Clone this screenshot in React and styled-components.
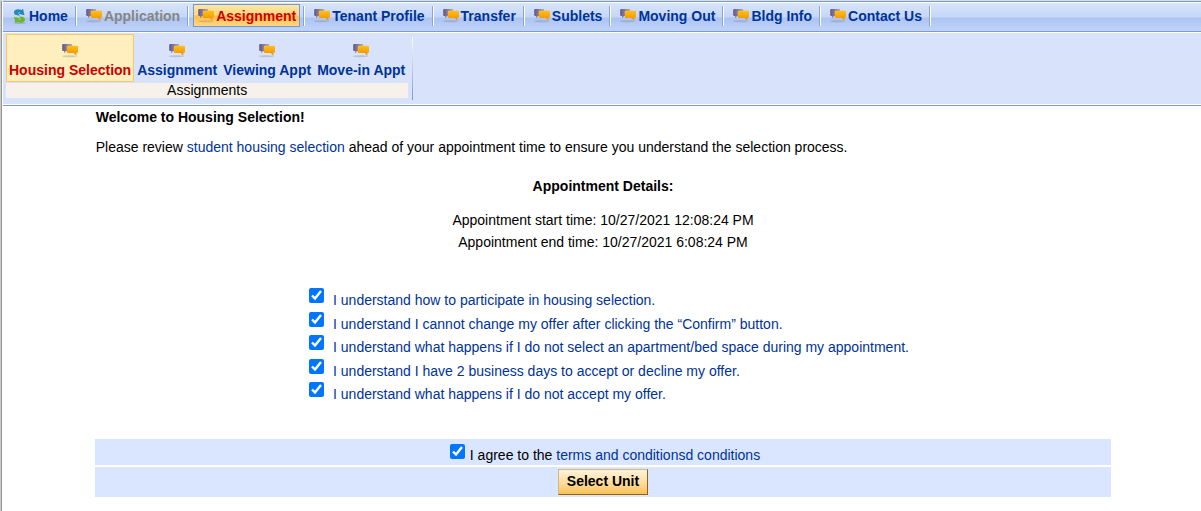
import React from "react";
import styled, { createGlobalStyle, css } from "styled-components";

const GlobalStyle = createGlobalStyle`
  * {
    box-sizing: border-box;
  }

  body {
    margin: 0;
    background: #ffffff;
    color: #000000;
    font-family: "Liberation Sans", Arial, sans-serif;
    font-size: 14px;
    line-height: 16px;
  }
`;

const Page = styled.div`
  min-height: 100vh;
  padding-left: 1px;
  border-left: 1px solid #c9c9c9;
  box-shadow: inset 1px 0 0 #959595;
  border-top: 1px solid #deddd3;
`;

const Bar = styled.header`
  margin-left: 1px;
  border-bottom: 1px solid #7b99d3;
`;

const TabBar = styled.nav`
  display: flex;
  height: 31px;
  padding-bottom: 2px;
  border-top: 1px solid #7b99d3;
  border-bottom: 1px solid #7b99d3;
  box-shadow: inset 0 1px 0 #ffffff;
  background: linear-gradient(#d9e5fb 0, #c5d6f7 15px, #adc4f3 16px, #c0d3f8 100%);
`;

const TabItem = styled.div`
  display: flex;
  align-items: center;
  padding-left: 4px;

  &::after {
    content: "";
    width: 2px;
    height: 20px;
    margin-left: 3px;
    background: linear-gradient(90deg, #86a3dc 50%, #ffffff 50%);
  }
`;

const Tab = styled.a`
  display: flex;
  align-items: center;
  gap: 2px;
  height: 23px;
  padding: 0 3px 0 4px;
  border: 1px solid transparent;
  color: ${(props) => (props.$muted ? "#868686" : "#003399")};
  font-weight: bold;
  text-decoration: none;
  white-space: nowrap;

  ${(props) =>
    props.$active &&
    css`
      border-color: #6f9ad3;
      background: linear-gradient(#ffe5a0 0, #ffd883 10px, #ffc04c 11px, #ffd683 100%);
      color: #cc0000;
    `}
`;

const Ribbon = styled.div`
  display: flex;
  height: 73px;
  padding: 1px 3px 4px;
  border-top: 1px solid #ffffff;
  border-bottom: 1px solid #ffffff;
  background: #d8e2fa;
`;

const RibbonGroup = styled.section`
  display: flex;
  flex-direction: column;
`;

const RibbonItems = styled.div`
  display: flex;
`;

const RibbonLink = styled.a`
  display: flex;
  flex-direction: column;
  align-items: center;
  gap: 4px;
  height: 48px;
  padding: 8px 2px 0;
  border: 1px solid ${(props) => (props.$active ? "#fdc667" : "transparent")};
  background: ${(props) => (props.$active ? "#ffefbf" : "transparent")};
  color: ${(props) => (props.$active ? "#cc0000" : "#003399")};
  font-weight: bold;
  text-decoration: none;
  white-space: nowrap;
`;

const RibbonTitle = styled.div`
  height: 15px;
  margin-top: 1px;
  background: #f6f1ea;
  line-height: 15px;
  text-align: center;
`;

const RibbonDivider = styled.div`
  width: 1px;
  height: 63px;
  margin: 3px 0 0 4px;
  background: linear-gradient(#ffffff, #7b99d3);
`;

const Content = styled.main`
  margin-left: 3px;
`;

const Inner = styled.div`
  width: 85%;
  margin: 0 auto;
`;

const Intro = styled.div`
  padding: 3px 1px 0;
`;

const Welcome = styled.h1`
  margin: 0 0 14px;
  font-size: 14px;
  line-height: 16px;
`;

const Text = styled.p`
  margin: 0;
`;

const Link = styled.a`
  color: #003399;
  text-decoration: none;
`;

const Details = styled.section`
  margin-top: 23px;
  text-align: center;
  line-height: 22px;
`;

const DetailsTitle = styled.h2`
  margin: 0 0 15px;
  font-size: 14px;
  line-height: 16px;
`;

const CheckList = styled.div`
  display: grid;
  grid-template-rows: repeat(5, 1fr);
  width: fit-content;
  height: 118px;
  margin: 34px auto 0;
  padding-left: 8px;
`;

const CheckRow = styled.div`
  display: flex;
  align-items: flex-start;
  gap: 6px;
  color: #003399;

  label {
    padding-top: 5px;
  }
`;

const CheckBox = styled.input`
  flex: none;
  width: 15px;
  height: 15px;
  margin: 1px 3px 0 4px;
`;

const Band = styled.div`
  display: flex;
  justify-content: center;
  align-items: flex-start;
  height: ${(props) => props.$height}px;
  padding-top: ${(props) => props.$top}px;
  background: #dae6ff;
`;

const Bands = styled.div`
  display: grid;
  gap: 2px;
  margin-top: 34px;

  label {
    padding: 4px 0 0 2px;
  }
`;

const SubmitButton = styled.button`
  height: 26px;
  padding: 0 8px 2px;
  border: 1px solid;
  border-color: #d5b77c #98610f #98610f #d5b77c;
  background: linear-gradient(#fff3dc, #ffdfa1 50%, #fbc158);
  color: #000000;
  font: bold 14px "Liberation Sans", Arial, sans-serif;
`;

const ChatIcon = () => (
  <svg width="16" height="15" viewBox="0 0 16 15" aria-hidden="true">
    <defs>
      <linearGradient id="orange" x1="0" y1="0" x2="0" y2="1">
        <stop offset="0" stopColor="#ffc116" />
        <stop offset="1" stopColor="#f28b00" />
      </linearGradient>
      <linearGradient id="purple" x1="0" y1="0" x2="1" y2="0">
        <stop offset="0" stopColor="#625785" />
        <stop offset="1" stopColor="#b3a9c4" />
      </linearGradient>
    </defs>
    <ellipse cx="7.5" cy="13.2" rx="7.5" ry="1" fill="#777777" opacity="0.3" />
    <path d="M1.2 1h8q1 0 1 1v6H4l-1.700 2.300V8H1.200q-1 0-1-1V2q0-1 1-1z" fill="url(#purple)" />
    <path
      d="M6 2.800h9q1 0 1 1v5q0 1-1 1h-.6v3L11.600 10H6q-1.200 0-1.200-1.200V4Q4.800 2.800 6 2.800z"
      fill="url(#orange)"
    />
  </svg>
);

const RefreshIcon = () => (
  <svg width="15" height="16" viewBox="0 0 15 16" aria-hidden="true">
    <ellipse cx="8" cy="15" rx="6" ry="1" fill="#777777" opacity="0.3" />
    <path
      d="M2 4.500C2 1.500 6 .5 9.500 2L11 .8l1.500 6.400-6-1.500 1.600-1.400C6 3.700 5.500 5 8 7.500 5 7.700 2 7 2 4.500z"
      fill="#2587bd"
    />
    <path
      d="M13 11.500c0 3-4 4-7.500 2.500L3.500 15.200 2 8.800l6 1.500-1.500 1.400c2 .6 3-.7.500-3.200 3-.2 6 .5 6 3z"
      fill="#6cb82b"
    />
  </svg>
);

const tabs = [
  { label: "Home", icon: RefreshIcon },
  { label: "Application", muted: true },
  { label: "Assignment", active: true },
  { label: "Tenant Profile" },
  { label: "Transfer" },
  { label: "Sublets" },
  { label: "Moving Out" },
  { label: "Bldg Info" },
  { label: "Contact Us" },
];

const ribbonLinks = ["Housing Selection", "Assignment", "Viewing Appt", "Move-in Appt"];

const statements = [
  "I understand how to participate in housing selection.",
  "I understand I cannot change my offer after clicking the “Confirm” button.",
  "I understand what happens if I do not select an apartment/bed space during my appointment.",
  "I understand I have 2 business days to accept or decline my offer.",
  "I understand what happens if I do not accept my offer.",
];

const Header = () => {
  return (
    <Bar>
      <TabBar>
        {tabs.map(({ label, icon: Icon = ChatIcon, muted, active }) => (
          <TabItem key={label}>
            <Tab href="#" $muted={muted} $active={active}>
              <Icon />
              {label}
            </Tab>
          </TabItem>
        ))}
      </TabBar>
      <Ribbon>
        <RibbonGroup>
          <RibbonItems>
            {ribbonLinks.map((label, i) => (
              <RibbonLink key={label} href="#" $active={i === 0}>
                <ChatIcon />
                {label}
              </RibbonLink>
            ))}
          </RibbonItems>
          <RibbonTitle>Assignments</RibbonTitle>
        </RibbonGroup>
        <RibbonDivider />
      </Ribbon>
    </Bar>
  );
};

export default function App() {
  return (
    <Page>
      <GlobalStyle />
      <Header />
      <Content>
        <Inner>
          <Intro>
            <Welcome>Welcome to Housing Selection!</Welcome>
            <Text>
              Please review <Link href="#">student housing selection</Link> ahead of your
              appointment time to ensure you understand the selection process.
            </Text>
          </Intro>
          <Details>
            <DetailsTitle>Appointment Details:</DetailsTitle>
            <Text>Appointment start time: 10/27/2021 12:08:24 PM</Text>
            <Text>Appointment end time: 10/27/2021 6:08:24 PM</Text>
          </Details>
          <CheckList>
            {statements.map((text, i) => (
              <CheckRow key={text}>
                <CheckBox type="checkbox" id={`statement-${i}`} defaultChecked />
                <label htmlFor={`statement-${i}`}>{text}</label>
              </CheckRow>
            ))}
          </CheckList>
          <Bands>
            <Band $height={26} $top={4}>
              <CheckBox type="checkbox" id="agree" defaultChecked />
              <label htmlFor="agree">
                I agree to the <Link href="#">terms and conditionsd conditions</Link>
              </label>
            </Band>
            <Band $height={30} $top={2}>
              <SubmitButton type="button">Select Unit</SubmitButton>
            </Band>
          </Bands>
        </Inner>
      </Content>
    </Page>
  );
}
